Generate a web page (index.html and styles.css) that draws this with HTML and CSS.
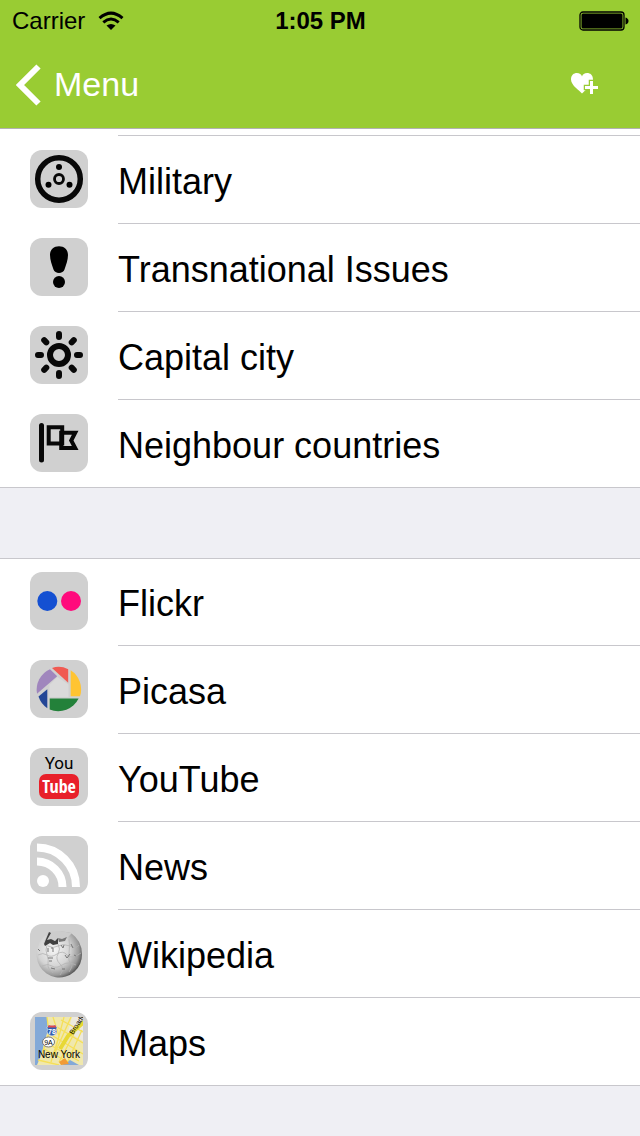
FILE: index.html
```html
<!DOCTYPE html>
<html lang="en">
<head>
<meta charset="utf-8">
<meta name="viewport" content="width=device-width, initial-scale=1">
<title>Country</title>
<link rel="stylesheet" href="styles.css">
</head>
<body>
<header class="top">
  <div class="status">
    <div class="carrier">
      <span>Carrier</span>
      <svg class="wifi" width="26" height="20" viewBox="0 0 26 20" aria-hidden="true"><g fill="none" stroke="#000" stroke-width="3"><path d="M1.500 7.200Q13-3 24.500 7.200"/><path d="M5.300 11.300Q13 4.800 20.700 11.300"/></g><path d="M8.500 14.600Q13 11.200 17.500 14.600L13 19Z"/></svg>
    </div>
    <span class="clock">1:05 PM</span>
    <svg class="battery" width="50" height="20" viewBox="0 0 50 20" aria-hidden="true"><rect x="1" y="1" width="44" height="18" rx="3" fill="none" stroke="#000" stroke-width="1.300"/><rect x="2.500" y="2.500" width="41" height="15" rx="1.500"/><path d="M46.500 6.500q3 1 3 3.500t-3 3.500z"/></svg>
  </div>
  <nav class="bar">
    <a class="back" href="#menu">
      <svg width="26" height="42" viewBox="0 0 26 42" aria-hidden="true"><path d="M22.500 2.500L4 21L22.500 39.500" fill="none" stroke="#fff" stroke-width="6"/></svg>
      <span>Menu</span>
    </a>
    <button class="fav" type="button" aria-label="Add to favourites">
      <svg width="28" height="24" viewBox="0 0 28 24" aria-hidden="true"><path d="M11 20.500C9 18 0 12.500 0 6.500C0 2 3 0 5.800 0C8.500 0 10.500 1.500 11 3.500C11.500 1.500 13.500 0 16.200 0C19 0 22 2 22 6.500C22 12.500 13 18 11 20.500Z" fill="#fff"/><path d="M19 8h3v5h5v3h-5v5h-3v-5h-5v-3h5z" fill="#fff" stroke="#9c3" stroke-width="2.500" paint-order="stroke"/></svg>
    </button>
  </nav>
</header>
<main>
  <div class="previous"><div class="line"></div></div>
  <ul class="group">
    <li><a class="row" href="#military">
      <svg class="icon" viewBox="0 0 58 58" aria-hidden="true"><g fill="none" stroke="#080808"><circle cx="29" cy="29" r="21.300" stroke-width="5.500"/><circle cx="29" cy="29" r="4.500" stroke-width="2.800"/></g><circle cx="29" cy="17" r="3"/><circle cx="18.500" cy="34.700" r="3"/><circle cx="39.500" cy="34.700" r="3"/></svg>
      <span class="label">Military</span></a></li>
    <li><a class="row" href="#issues">
      <svg class="icon" viewBox="0 0 58 58" aria-hidden="true"><path d="M29 8.300C34 8.300 38 11.500 38 17C38 22 36 27 34.500 31.500C33.800 33.800 31.500 35 29 35S24.200 33.800 23.500 31.500C22 27 20 22 20 17C20 11.500 24 8.300 29 8.300Z"/><circle cx="29" cy="44" r="6"/></svg>
      <span class="label">Transnational Issues</span></a></li>
    <li><a class="row" href="#capital">
      <svg class="icon" viewBox="0 0 58 58" aria-hidden="true"><g fill="none" stroke="#080808"><circle cx="29" cy="29" r="9" stroke-width="6"/><path stroke-width="6" stroke-linecap="round" d="M29 8v3M29 47v3M8 29h3M47 29h3M14.200 14.200l2.100 2.100M41.700 41.700l2.100 2.100M43.800 14.200l-2.100 2.100M16.300 41.700l-2.100 2.100"/></g></svg>
      <span class="label">Capital city</span></a></li>
    <li><a class="row" href="#neighbours">
      <svg class="icon" viewBox="0 0 58 58" aria-hidden="true"><g fill="none" stroke="#080808"><path d="M11.500 11.500V46" stroke-width="5" stroke-linecap="round"/><path d="M18.700 13.300H32.200V29.500H18.700Z" stroke-width="4"/><path d="M31.200 18.700H45.200L41.200 26.500L45.200 34H31.200Z" stroke-width="4"/></g></svg>
      <span class="label">Neighbour countries</span></a></li>
  </ul>
  <ul class="group links">
    <li><a class="row" href="#flickr">
      <svg class="icon" viewBox="0 0 58 58" aria-hidden="true"><circle cx="17.300" cy="29" r="10" fill="#1450d2"/><circle cx="41" cy="29" r="10" fill="#ff0a7c"/></svg>
      <span class="label">Flickr</span></a></li>
    <li><a class="row" href="#picasa">
      <svg class="icon" viewBox="0 0 58 58" aria-hidden="true"><path d="M19.500 25L27.500 17L38.500 24.500V37H19.500Z" fill="#dadada"/><path d="M22 8Q30 5 38.200 9.200V22.700Z" fill="#f05a52"/><path d="M40.700 10.300A22.500 22.500 0 0 1 50 36.300H40.700Z" fill="#ffc432"/><path d="M19.700 38.500H48.600A22.500 22.500 0 0 1 19.700 49.500Z" fill="#23813a"/><path d="M17.300 29.300V48.200A22.500 22.500 0 0 1 8.500 36.500Z" fill="#234696"/><path d="M7 33.800A22.500 22.500 0 0 1 20 9.200L27.200 16.200Z" fill="#a086bd"/></svg>
      <span class="label">Picasa</span></a></li>
    <li><a class="row" href="#youtube">
      <span class="icon youtube" aria-hidden="true"><span class="you">You</span><span class="tube">Tube</span></span>
      <span class="label">YouTube</span></a></li>
    <li><a class="row" href="#news">
      <svg class="icon" viewBox="0 0 58 58" aria-hidden="true"><circle cx="13" cy="45" r="6" fill="#fff"/><g fill="none" stroke="#fff" stroke-width="8"><path d="M7 25.500A25.500 25.500 0 0 1 32.500 51"/><path d="M7 11.500A39 39 0 0 1 46 51"/></g></svg>
      <span class="label">News</span></a></li>
    <li><a class="row" href="#wikipedia">
      <svg class="icon" viewBox="0 0 58 58" aria-hidden="true"><defs><radialGradient id="globe" cx=".38" cy=".4" r=".65"><stop offset="0" stop-color="#f5f5f5"/><stop offset=".55" stop-color="#d4d4d4"/><stop offset=".85" stop-color="#999"/><stop offset="1" stop-color="#555"/></radialGradient></defs><path d="M16 11Q29 5 41 9Q52 17 52 30A22.700 22.700 0 1 1 8 23Q10 15 16 11Z" fill="url(#globe)"/><path d="M18 8L29 7L42 9L37 14L28 16L18 16L13 20Z" fill="#ccc"/><path d="M14 20L19 8L21 9L17 16L21 15L25 17L28 14L28 20L23 21L20 19L15 22Z" fill="#414141"/><path d="M28 14L32 15L37 13L35 17L29 18Z" fill="#777"/><g fill="none" stroke="#b4b4b4" stroke-width=".8"><path d="M8 31q5-3 9 0t10-1 10 1 14-2M12 42q6-3 10 0t10-1 14 0M17 21q-2 5 0 10t1 9 5 9M28 20q3 5 0 10t2 10 0 11M39 15q1 7 0 15t2 9-2 9M18 22q5 3 10 0t12 0 9-1"/></g><g fill="none" stroke="#777" stroke-width="1"><path d="M18 24v4M21 24h2v4M31 21l2 3 1-3M41 20l2 4M8 25l2 2M18 34h5M19 37h3M35 31l2 3 3-4M21 44l4 1M32 45h3M44 31l2 1"/></g></svg>
      <span class="label">Wikipedia</span></a></li>
    <li><a class="row" href="#maps">
      <svg class="icon" viewBox="0 0 58 58" aria-hidden="true"><defs><clipPath id="tile"><path d="M5 5H53V53H5Z"/></clipPath></defs><g clip-path="url(#tile)"><path fill="#f0e8ad" d="M5 5h48v48H5z"/><path d="M5 5H17L18 18L14 31L12 41L7 53H5Z" fill="#83a9d8"/><path d="M32 53L40 48L49 53Z" fill="#83a9d8"/><path d="M42 5H53V29L38 20Z" fill="#ece9df"/><g fill="none" stroke="#f5df58" stroke-width="1.300"><path d="M17 5L19 21L12 42M23 5L29 24L21 50M34 5L24 43M41 5L24 43M13 29L49 49M18 21L53 42M27 15L53 31M31 8L53 20M45 20L29 50M52 18L37 51M8 48L29 53M14 37L38 50"/></g><path d="M54 10L38 24L30 37" fill="none" stroke="#e8d834" stroke-width="4"/><text x="43" y="23" class="street" transform="rotate(-57 43 23)">Broadw</text><path d="M29 50L35 46L39 52L31 53Z" fill="#f29b35"/></g><path d="M17 15L19 13L22 14L25 13L27 15Q26 18 27 20Q26 23 22 24Q18 23 17 20Q18 18 17 15Z" fill="#315fb2" stroke="#fff" stroke-width=".5"/><path d="M18 13.500h8v2h-8z" fill="#e34b48"/><text class="shield" x="22" y="21.500">78</text><ellipse cx="18.500" cy="30" rx="6" ry="5" fill="#fff" stroke="#777" stroke-width="1"/><text class="route" x="18.500" y="32.500">9A</text><text class="city" x="29" y="46">New York</text></svg>
      <span class="label">Maps</span></a></li>
  </ul>
</main>
</body>
</html>
```
FILE: styles.css
```css
* { box-sizing: border-box; }
body {
  margin: 0;
  background: #efeff4;
  color: #000;
  font-family: "Liberation Sans", Arial, sans-serif;
}
.top {
  background: #9c3;
  border-bottom: 1px solid #b2b2b2;
}
.status {
  display: grid;
  grid-template-columns: 1fr auto 1fr;
  align-items: center;
  height: 41px;
  padding: 0 11px 0 12px;
  font-size: 24px;
}
.carrier { display: flex; align-items: center; gap: 13px; }
.wifi, .battery { display: block; }
.clock { font-weight: bold; }
.battery { justify-self: end; }
.bar {
  display: flex;
  align-items: center;
  justify-content: space-between;
  height: 87px;
  padding: 0 41px 0 16px;
}
.back {
  display: flex;
  align-items: center;
  gap: 12px;
  color: #fff;
  font-size: 34px;
  text-decoration: none;
}
.fav {
  display: flex;
  padding: 0;
  border: 0;
  background: none;
}
.previous {
  height: 7px;
  padding-left: 118px;
  background: #fff;
}
.line {
  height: 7px;
  border-bottom: 1px solid #c8c7cc;
}
.group {
  margin: 0;
  padding: 0;
  list-style: none;
  background: #fff;
  box-shadow: inset 0 -1px #c8c7cc;
}
.links {
  margin-top: 70px;
  box-shadow: inset 0 1px #c8c7cc, inset 0 -1px #c8c7cc;
}
.row {
  display: flex;
  gap: 30px;
  height: 88px;
  padding-left: 30px;
  color: #000;
  text-decoration: none;
}
.icon {
  flex: none;
  width: 58px;
  height: 58px;
  margin-top: 14px;
  border-radius: 12px;
  background: #d0d0d0;
}
.label {
  flex: 1;
  padding-top: 4px;
  border-bottom: 1px solid #c8c7cc;
  font-size: 36px;
  line-height: 84px;
}
.group li:last-child .label { border-bottom: 0; }
.youtube {
  display: flex;
  flex-direction: column;
  align-items: center;
  padding-top: 5px;
}
.you {
  font-family: Roboto, sans-serif;
  font-size: 17px;
  line-height: 21px;
}
.tube {
  width: 40px;
  border-radius: 7px;
  background: #e8202a;
  color: #fff;
  font-family: "Open Sans Condensed", Roboto, sans-serif;
  font-size: 18px;
  font-weight: bold;
  line-height: 25px;
  text-align: center;
}
.street { font-size: 7px; }
.shield { fill: #fff; font-size: 7px; font-weight: bold; text-anchor: middle; }
.route { font-size: 7px; text-anchor: middle; }
.city { font-size: 10px; text-anchor: middle; }
```
